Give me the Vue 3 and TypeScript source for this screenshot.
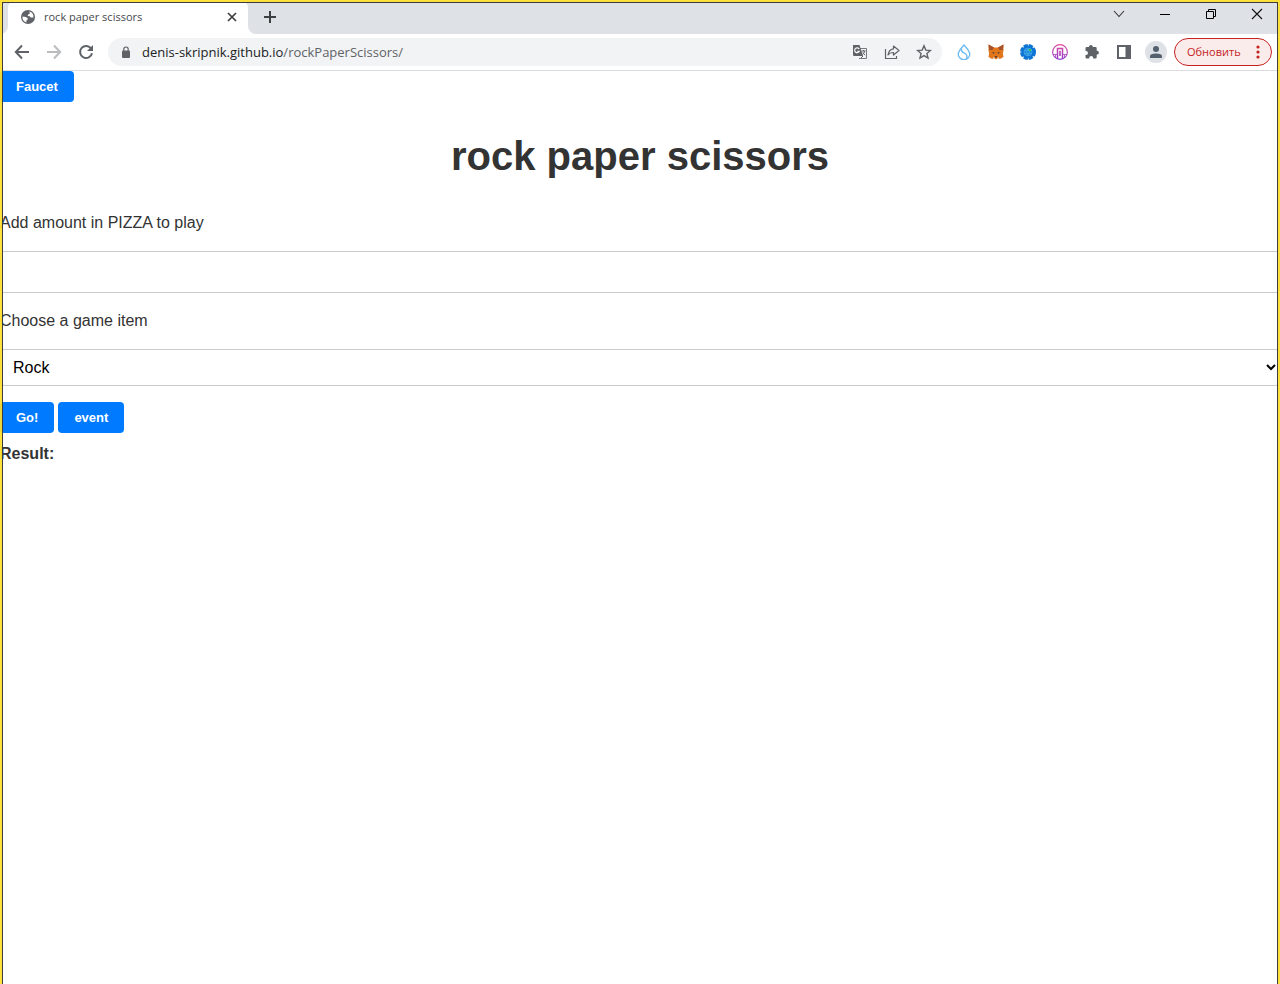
<script setup lang="ts">
import { ref } from 'vue'

type Item = 'Rock' | 'Paper' | 'Scissors'

const items: Item[] = ['Rock', 'Paper', 'Scissors']
const amount = ref<string>('')
const choice = ref<Item>('Rock')
const address = 'https://denis-skripnik.github.io/rockPaperScissors/'
</script>

<template>
  <div class="window">
    <header class="browser">
      <div class="tabstrip">
        <div class="prev-tab"></div>
        <div class="tab">
          <svg class="globe" width="14" height="14" viewBox="0 0 14 14">
            <circle cx="7" cy="7" r="7" fill="#5f6368" />
            <path d="M8.2 1.6 L9 3.2 L7.3 4.6 L6.6 6 L8.8 6.2 L9.7 7.6 L12.4 7.5 A5.6 5.6 0 0 0 8.2 1.6Z M1.5 6.4 L4.8 7 L6.8 8.2 L6.5 9.7 L5.3 10.4 L5.4 12.4 A5.6 5.6 0 0 1 1.5 6.4Z" fill="#fff" />
          </svg>
          <span class="tab-title">rock paper scissors</span>
          <button class="icon-btn tab-close" aria-label="Close tab">
            <svg width="10" height="10" viewBox="0 0 10 10"><path d="M1 1L9 9M9 1L1 9" stroke="#3c4043" stroke-width="1.7" /></svg>
          </button>
        </div>
        <button class="icon-btn new-tab" aria-label="New tab">
          <svg width="12" height="12" viewBox="0 0 12 12"><path d="M6 0V12M0 6H12" stroke="#3c4043" stroke-width="2" /></svg>
        </button>
        <div class="captions">
          <button class="icon-btn" aria-label="Search tabs">
            <svg width="12" height="12" viewBox="0 0 12 12"><path d="M1 3L6 8.5L11 3" fill="none" stroke="#333" stroke-width="1.1" /></svg>
          </button>
          <button class="icon-btn" aria-label="Minimize">
            <svg width="12" height="12" viewBox="0 0 12 12"><path d="M1 6.5H11" stroke="#000" /></svg>
          </button>
          <button class="icon-btn" aria-label="Restore">
            <svg width="12" height="12" viewBox="0 0 12 12"><path d="M1.500 3.500H8.500V10.500H1.500ZM3.500 3.500V1.500H10.500V8.500H8.500" fill="none" stroke="#000" /></svg>
          </button>
          <button class="icon-btn" aria-label="Close">
            <svg width="12" height="12" viewBox="0 0 12 12"><path d="M1 1L11 11M11 1L1 11" stroke="#111" stroke-width="1.1" /></svg>
          </button>
        </div>
      </div>

      <div class="toolbar">
        <nav class="nav">
          <button class="icon-btn" aria-label="Back">
            <svg width="16" height="16" viewBox="0 0 16 16"><path d="M15 8H2M8 1.500L1.800 8L8 14.500" fill="none" stroke="#5f6368" stroke-width="2" /></svg>
          </button>
          <button class="icon-btn" aria-label="Forward">
            <svg width="16" height="16" viewBox="0 0 16 16"><path d="M1 8H14M8 1.500L14.200 8L8 14.500" fill="none" stroke="#babcbe" stroke-width="2" /></svg>
          </button>
          <button class="icon-btn" aria-label="Reload">
            <svg width="16" height="16" viewBox="0 0 16 16"><path d="M13.200 4.800A6 6 0 1 0 14 9.200" fill="none" stroke="#5f6368" stroke-width="2" /><path d="M15 1V7H9Z" fill="#5f6368" /></svg>
          </button>
        </nav>

        <div class="omnibox">
          <svg class="lock" width="10" height="13" viewBox="0 0 10 13"><rect x="1" y="4.500" width="8" height="7.500" rx="1" fill="#5f6368" /><path d="M2.800 5V3.200A2.200 2.200 0 0 1 7.200 3.200V5" fill="none" stroke="#5f6368" stroke-width="1.200" /></svg>
          <a class="url" :href="address">denis-skripnik.github.io<span>/rockPaperScissors/</span></a>
          <div class="page-actions">
            <button class="icon-btn" aria-label="Translate">
              <svg width="16" height="16" viewBox="0 0 16 16">
                <path d="M7 4.500H14.500V14.500H7" fill="#f1f3f4" stroke="#777b80" />
                <path d="M1 1H7.500L11 12H2Q1 12 1 11Z" fill="#5f6368" />
                <path d="M7.200 5.100A2.400 2.400 0 1 0 7.300 7.200H5.200" fill="none" stroke="#fff" stroke-width="1.100" />
                <path d="M9.500 7H13.500M11.500 6V7M12.800 7Q12 9.700 10.500 10.500M10.800 8.500L13 11.200M9 14L11 12" fill="none" stroke="#5f6368" />
              </svg>
            </button>
            <button class="icon-btn" aria-label="Share">
              <svg width="16" height="16" viewBox="0 0 16 16"><path d="M1.500 5V14.500H12.500V12" fill="none" stroke="#5f6368" stroke-width="1.200" /><path d="M9.500 2L15 6.500L9.500 11V8.500Q6 8.300 4 11Q4.700 5.500 9.500 4.800Z" fill="none" stroke="#5f6368" stroke-width="1.200" stroke-linejoin="round" /></svg>
            </button>
            <button class="icon-btn" aria-label="Bookmark">
              <svg width="16" height="16" viewBox="0 0 16 16"><path d="M8 1.800L9.800 6.100L14.400 6.500L10.900 9.500L12 14L8 11.600L4 14L5.100 9.500L1.600 6.500L6.200 6.100Z" fill="none" stroke="#5f6368" stroke-width="1.400" /></svg>
            </button>
          </div>
        </div>

        <div class="extensions">
          <button class="icon-btn" aria-label="Wallet">
            <svg width="16" height="16" viewBox="0 0 16 16"><path d="M8 1Q2.200 7.500 2.200 10A5.800 5.600 0 0 0 13.800 10Q13.800 7.500 8 1Z" fill="#fff" stroke="#6fbcf0" stroke-width="1.400" /><path d="M5.500 5Q5 7.800 8.500 9.200Q12 11 10.500 14.700" fill="none" stroke="#6fbcf0" stroke-width="1.400" /></svg>
          </button>
          <button class="icon-btn" aria-label="Fox wallet">
            <svg width="16" height="16" viewBox="0 0 16 16">
              <path d="M0.500 0.500L6 3.500H10L15.500 0.500L15.500 7L14.800 9L15.500 13L12 15L10 14L8 15.500L6 14L4 15L0.500 13L1.200 9L0.500 7Z" fill="#e2761b" />
              <path d="M0.500 0.500L6 3.500L4.500 6L1.200 6ZM15.500 0.500L10 3.500L11.500 6L14.800 6Z" fill="#a6532c" />
              <path d="M4 8L6.500 8.500L6 10ZM12 8L9.500 8.500L10 10Z" fill="#333b45" />
              <path d="M6.800 12.300H9.200L8.800 13.600H7.200Z" fill="#2f2a29" />
              <path d="M5 13L6.500 13.500L7 14.800L5 14.500ZM11 13L9.500 13.500L9 14.800L11 14.500Z" fill="#d7c1b3" />
            </svg>
          </button>
          <button class="icon-btn" aria-label="Network">
            <svg width="16" height="16" viewBox="0 0 16 16">
              <circle cx="8" cy="8" r="6.500" fill="#0c74d4" />
              <circle cx="8" cy="8" r="6.500" fill="none" stroke="#0c74d4" stroke-width="3" stroke-dasharray="4.100 1" />
              <circle cx="8" cy="8" r="4" fill="#1687dc" stroke="#4ba6ea" stroke-width="0.700" />
              <path d="M4 6.500H12M4 9.500H12M8 4Q5 8 8 12M8 4Q11 8 8 12" fill="none" stroke="#52b0e8" stroke-width="0.600" />
              <rect x="9" y="5" width="2" height="2" fill="#35d04f" />
            </svg>
          </button>
          <button class="icon-btn" aria-label="Bridge">
            <svg width="16" height="16" viewBox="0 0 16 16">
              <defs><linearGradient id="arch" gradientUnits="userSpaceOnUse" x1="0" y1="0" x2="0" y2="16"><stop offset="0" stop-color="#e5489b" /><stop offset="1" stop-color="#8c3fd0" /></linearGradient></defs>
              <g fill="none" stroke="url(#arch)"><circle cx="8" cy="8" r="7.400" stroke-width="1.100" /><path d="M5.500 15V4.500H10.500V15" stroke-width="1.500" /><path d="M7.500 12V7H8.500V12M1 10.500H5.500M10.500 10.500H15M3.500 11V13M12.500 11V13" stroke-width="0.800" /></g>
            </svg>
          </button>
          <button class="icon-btn" aria-label="Extensions">
            <svg width="16" height="16" viewBox="0 0 16 16"><path d="M1.500 4.200Q1.500 3 2.700 3H5V2.800A1.900 1.900 0 0 1 8.800 2.800V3H11.500Q12.700 3 12.700 4.200V6.800H13A1.900 1.900 0 0 1 13 10.600H12.700V13.300Q12.700 14.500 11.500 14.500H9.200V14A2 2 0 0 0 5.200 14V14.500H2.700Q1.500 14.500 1.500 13.300V10.900H2A2 2 0 0 0 2 6.900H1.500Z" fill="#5f6368" /></svg>
          </button>
          <button class="icon-btn" aria-label="Side panel">
            <svg width="16" height="16" viewBox="0 0 16 16"><path d="M1 1H15V15H1ZM3 3V13H9.500V3Z" fill="#5f6368" fill-rule="evenodd" /></svg>
          </button>
          <button class="icon-btn avatar" aria-label="Profile">
            <svg width="14" height="14" viewBox="0 0 14 14"><circle cx="7" cy="4" r="3" fill="#55606f" /><path d="M1 13V11.200Q1 8.500 7 8.500T13 11.200V13Z" fill="#55606f" /></svg>
          </button>
        </div>

        <button class="update">
          <span>Обновить</span>
          <svg width="4" height="14" viewBox="0 0 4 14" fill="#c5221f"><circle cx="2" cy="2" r="1.600" /><circle cx="2" cy="7" r="1.600" /><circle cx="2" cy="12" r="1.600" /></svg>
        </button>
      </div>
    </header>

    <main class="page">
      <button class="action">Faucet</button>
      <h1>rock paper scissors</h1>
      <form @submit.prevent>
        <label for="amount">Add amount in PIZZA to play</label>
        <input id="amount" v-model="amount" type="text" />
        <label for="item">Choose a game item</label>
        <select id="item" v-model="choice">
          <option v-for="item in items" :key="item" :value="item">{{ item }}</option>
        </select>
        <div class="actions">
          <button class="action" type="submit">Go!</button>
          <button class="action" type="button">event</button>
        </div>
      </form>
      <p class="result">Result:</p>
    </main>
    <div class="frame"></div>
  </div>
</template>

<style>
body {
  margin: 0;
  background: #fff;
}
</style>

<style scoped>
.window {
  min-height: 100vh;
  font-family: "Liberation Sans", Arial, sans-serif;
  color: #333;
}
.frame {
  position: fixed;
  inset: 0;
  pointer-events: none;
  border: 2px solid rgba(254, 222, 44, 0.92);
  border-bottom: 0;
  box-shadow: inset 1px 0 #3c3c3c, inset -1px 0 #3c3c3c, inset 0 1px #3c3c3c;
}
.browser {
  font-family: "Open Sans", "Noto Sans", sans-serif;
  border-bottom: 1px solid #dadce0;
}
.icon-btn {
  display: flex;
  align-items: center;
  justify-content: center;
  padding: 0;
  border: 0;
  background: none;
}
.tabstrip {
  display: flex;
  height: 34px;
  background: linear-gradient(to bottom, #dee1e6 50%, #fff 50%);
}
.prev-tab {
  width: 8px;
  background: #dee1e6;
  border-bottom-right-radius: 8px;
}
.tab {
  box-sizing: border-box;
  display: flex;
  align-items: center;
  width: 240px;
  padding: 0 11px 0 13px;
  background: #fff;
  border-radius: 8px 8px 0 0;
}
.tab-title {
  flex: 1;
  margin-left: 9px;
  font-size: 11px;
  line-height: 16px;
  color: #45494d;
}
.new-tab {
  flex: 1;
  justify-content: flex-start;
  padding-left: 16px;
  background: #dee1e6;
  border-bottom-left-radius: 8px;
}
.captions {
  display: flex;
  align-items: flex-start;
  background: #dee1e6;
}
.captions .icon-btn {
  width: 46px;
  height: 28px;
}
.toolbar {
  display: flex;
  align-items: center;
  height: 36px;
  padding: 0 8px 0 14px;
}
.nav {
  display: flex;
  gap: 16px;
}
.omnibox {
  flex: 1;
  display: flex;
  align-items: center;
  height: 28px;
  margin-left: 14px;
  padding: 0 10px 0 13px;
  border-radius: 14px;
  background: #f1f3f4;
}
.url {
  flex: 1;
  margin-left: 11px;
  font-size: 13px;
  line-height: 20px;
  color: #202124;
  text-decoration: none;
}
.url span {
  color: #5f6368;
}
.page-actions {
  display: flex;
  gap: 16px;
}
.extensions {
  display: flex;
  align-items: center;
  gap: 16px;
  margin: 0 7px 0 14px;
}
.avatar {
  width: 22px;
  height: 22px;
  margin: 0 0 0 -3px;
  border-radius: 50%;
  background: #dee1e6;
}
.update {
  box-sizing: border-box;
  display: flex;
  align-items: center;
  justify-content: space-between;
  width: 98px;
  height: 28px;
  padding: 0 11px 0 12px;
  border: 1px solid #c5221f;
  border-radius: 14px;
  background: #faeceb;
  color: #c5221f;
  font-family: inherit;
  font-size: 11px;
}
.update span {
  padding-bottom: 2px;
}
.page {
  font-size: 16px;
  line-height: 18px;
}
.action {
  display: inline-block;
  padding: 8px 16px;
  border: 0;
  border-radius: 4px;
  background: #007bff;
  color: #fff;
  font-family: inherit;
  font-size: 13px;
  font-weight: 700;
  line-height: 15px;
  vertical-align: top;
}
h1 {
  margin: 31px 0 35px;
  font-size: 40px;
  line-height: 46px;
  text-align: center;
}
form {
  display: flex;
  flex-direction: column;
}
input,
select {
  box-sizing: border-box;
  width: 100%;
  margin: 19px 0;
  border: 1px solid #ccc;
  border-radius: 4px;
  background: #fff;
  color: #000;
  font-family: inherit;
  font-size: 16px;
}
input {
  height: 42px;
  padding: 8px;
}
select {
  height: 37px;
  padding: 8px 1px 8px 8px;
  margin-bottom: 16px;
}
.actions {
  display: flex;
  gap: 4px;
}
.result {
  margin: 12px 0 0;
  font-weight: 700;
}
</style>
